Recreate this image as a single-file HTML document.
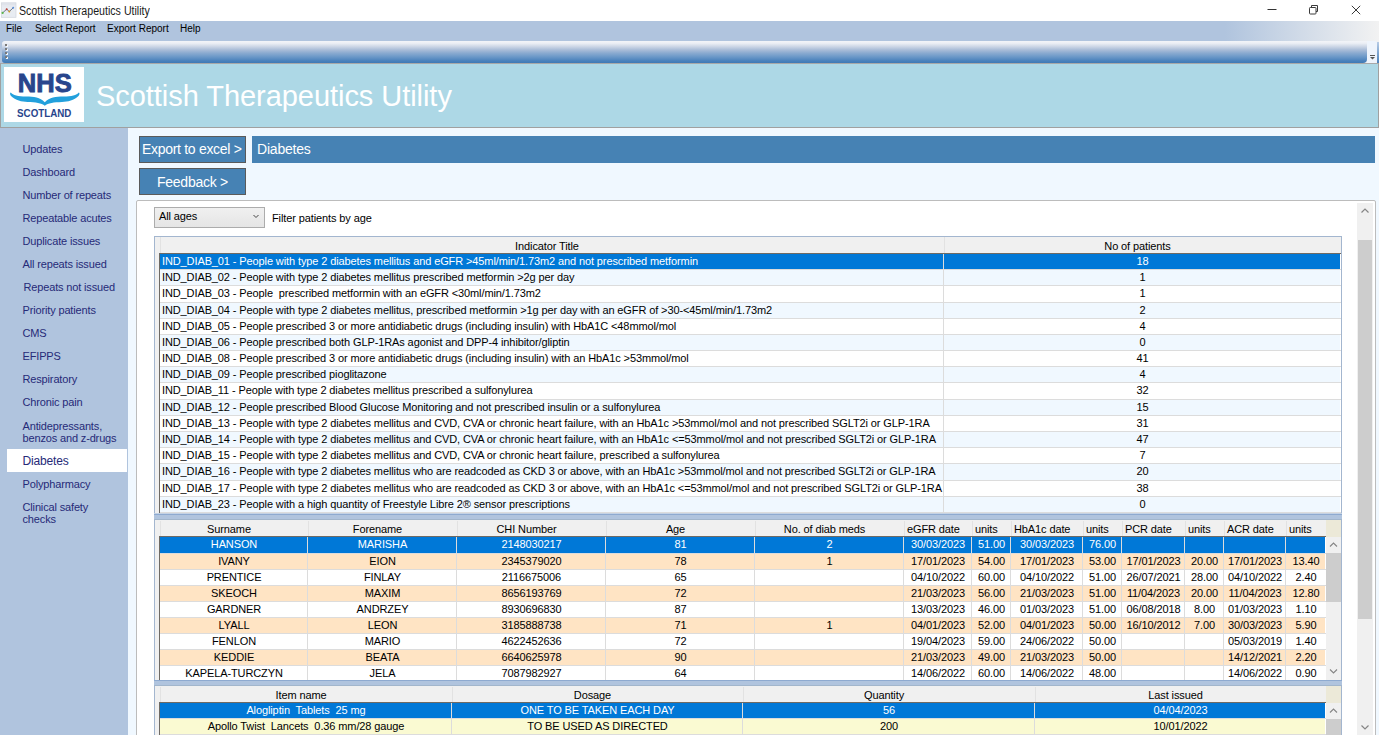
<!DOCTYPE html>
<html><head><meta charset="utf-8"><style>
*{box-sizing:border-box;margin:0;padding:0}
html,body{width:1379px;height:735px;overflow:hidden;background:#f0f8ff;font-family:"Liberation Sans",sans-serif;position:relative}
.a{position:absolute}
.nw{white-space:nowrap}
#title{left:0;top:0;width:1379px;height:21px;background:#fff}
#menu{left:0;top:21px;width:1379px;height:42px;background:linear-gradient(to right,#b0c4de 0,#b0c4de 1225px,#f2f2f2 1379px)}
#menu span{position:absolute;top:2px;font-size:10px;color:#000;white-space:nowrap}
#tool{left:2px;top:41px;width:1365px;height:22px;border-radius:3px 0 4px 3px;background:linear-gradient(to bottom,#f2f4f8 0,#eceff5 10%,#d3dce9 22%,#aabdd8 40%,#8aaad0 55%,#6b98c8 72%,#4a82bc 90%,#3f7ab5 100%)}
#tool2{left:1367px;top:41px;width:10px;height:22px;background:#eef4fc;border-radius:0 2px 2px 0}
#hdr{left:0;top:63px;width:1379px;height:65px;background:#add8e6;border-top:1px solid #a8a8a8;border-left:1px solid #a0a0a0;border-bottom:1px solid #a0a0a0;border-right:1px solid #a0a0a0}
#logo{left:4px;top:67px;width:80px;height:55px;background:#fff}
#htext{left:96px;top:78.5px;letter-spacing:-0.05px;font-size:29px;color:#fff;white-space:nowrap;line-height:34px}
#side{left:0;top:128px;width:128px;height:607px;background:#b0c4de}
.nav{position:absolute;left:22.5px;font-size:11px;color:#262a78;white-space:nowrap;line-height:12px;letter-spacing:-0.15px}
.btn{position:absolute;background:#4682b4;color:#fff;font-size:14px;white-space:nowrap}
.g{position:absolute;font-size:11px;letter-spacing:-0.11px;white-space:pre;line-height:16px;color:#000}
.c{position:absolute;overflow:hidden;white-space:nowrap}
</style></head><body>
<div id="title" class="a">
 <svg class="a" style="left:0;top:0" width="18" height="18" viewBox="0 0 18 18"><rect x="1.5" y="2.8" width="14.5" height="14.5" fill="#e8ecf2" stroke="#d0d4dc" stroke-width="0.7"/><line x1="1.5" y1="4" x2="16" y2="4" stroke="#d4d8e0" stroke-width="0.8"/><line x1="1.5" y1="6" x2="16" y2="6" stroke="#dfe3ea" stroke-width="0.6"/><polyline points="2.6,12.9 6.7,9.2 9.3,11.5 13.2,7.8" fill="none" stroke="#606878" stroke-width="0.9"/><circle cx="2.6" cy="12.9" r="1.1" fill="#5cb84a"/><circle cx="6.7" cy="9.2" r="1" fill="#c0453a"/><circle cx="9.3" cy="11.5" r="1" fill="#d49a20"/><circle cx="13.2" cy="7.8" r="1" fill="#5a8ed8"/></svg>
 <div class="a nw" style="left:19px;top:4px;font-size:12px;color:#1a1a1a;transform:scaleX(0.885);transform-origin:0 0">Scottish Therapeutics Utility</div>
 <svg class="a" style="left:1266px;top:4px" width="12" height="12"><line x1="1.5" y1="5.5" x2="10.5" y2="5.5" stroke="#333" stroke-width="1"/></svg>
 <svg class="a" style="left:1308px;top:4px" width="12" height="12"><rect x="1.5" y="3.5" width="6.5" height="6.5" rx="0.8" fill="none" stroke="#3a3a3a"/><polyline points="3.5,3.5 3.5,1.5 9.5,1.5 9.5,7.5 8,7.5" fill="none" stroke="#3a3a3a"/></svg>
 <svg class="a" style="left:1350px;top:4px" width="12" height="12"><line x1="1.8" y1="1.8" x2="10.2" y2="10.2" stroke="#3a3a3a"/><line x1="10.2" y1="1.8" x2="1.8" y2="10.2" stroke="#3a3a3a"/></svg>
</div>
<div id="menu" class="a"><span style="left:6px">File</span><span style="left:35px">Select Report</span><span style="left:107px">Export Report</span><span style="left:180px">Help</span></div>
<div id="tool" class="a"><div class="a" style="left:2.5px;top:3.3px;width:2px;height:2px;background:#7a7a7a;box-shadow:1px 1px 0 #f4f6fa"></div><div class="a" style="left:2.5px;top:7.3px;width:2px;height:2px;background:#7a7a7a;box-shadow:1px 1px 0 #f4f6fa"></div><div class="a" style="left:2.5px;top:11px;width:2px;height:2px;background:#7a7a7a;box-shadow:1px 1px 0 #f4f6fa"></div><div class="a" style="left:2.5px;top:14.6px;width:2px;height:2px;background:#7a7a7a;box-shadow:1px 1px 0 #f4f6fa"></div></div><div class="a" style="left:1377px;top:42px;width:2px;height:21px;background:linear-gradient(#b8cce6,#4a82bc)"></div><div id="tool2" class="a"><svg class="a" style="left:0;top:0" width="10" height="21"><rect x="3" y="14" width="5" height="1" fill="#555"/><polygon points="3,16 8,16 5.5,18.5" fill="#555"/></svg></div>
<div id="hdr" class="a"></div>
<div id="logo" class="a"><svg width="80" height="55" viewBox="0 0 80 55">
<text x="13.8" y="25.1" textLength="53.9" lengthAdjust="spacingAndGlyphs" font-family="Liberation Sans" font-weight="bold" font-size="25.7" fill="#28458c" stroke="#28458c" stroke-width="0.9">NHS</text>
<path d="M6.8,25.6 C9,28.5 14,29.6 22,29.6 C30,29.6 36,30.5 40.8,35.2 C45.6,30.5 51.6,29.6 59.6,29.6 C67.6,29.6 72.6,28.5 74.8,25.6 C76,26 75.5,28 74.5,29 C70,33.5 64,34.8 58,35 C50,35.3 44,36 40.8,38.8 C37.6,36 31.6,35.3 23.6,35 C17.6,34.8 11.6,33.5 7,29 C6,28 5.6,26 6.8,25.6 Z" fill="#22a0dc"/>
<text x="13.1" y="49.8" textLength="54.3" lengthAdjust="spacingAndGlyphs" font-family="Liberation Sans" font-weight="bold" font-size="10.4" fill="#28458c">SCOTLAND</text>
</svg></div>
<div id="htext" class="a">Scottish Therapeutics Utility</div>
<div id="side" class="a"></div>

<div class="nav" style="left:22.5px;top:143px">Updates</div>
<div class="nav" style="left:22.5px;top:166px">Dashboard</div>
<div class="nav" style="left:22.5px;top:189px">Number of repeats</div>
<div class="nav" style="left:22.5px;top:212px">Repeatable acutes</div>
<div class="nav" style="left:22.5px;top:235px">Duplicate issues</div>
<div class="nav" style="left:22.5px;top:258px">All repeats issued</div>
<div class="nav" style="left:23.5px;top:281px">Repeats not issued</div>
<div class="nav" style="left:22.5px;top:304px">Priority patients</div>
<div class="nav" style="left:22.5px;top:327px">CMS</div>
<div class="nav" style="left:22.5px;top:350px">EFIPPS</div>
<div class="nav" style="left:22.5px;top:373px">Respiratory</div>
<div class="nav" style="left:22.5px;top:396px">Chronic pain</div>
<div class="nav" style="top:420px">Antidepressants,<br>benzos and z-drugs</div>
<div class="a" style="left:7px;top:449px;width:120px;height:23px;background:#fff"></div>
<div class="nav" style="top:455px;font-size:12px;letter-spacing:-0.15px">Diabetes</div>
<div class="nav" style="top:478px">Polypharmacy</div>
<div class="nav" style="top:501px">Clinical safety<br>checks</div>
<div class="btn" style="left:139px;top:136px;width:107px;height:27px;border:1px solid #5a5a5a"><span class="a" style="left:2px;top:4px;letter-spacing:-0.3px">Export to excel &gt;</span></div>
<div class="btn" style="left:252px;top:136px;width:1123px;height:27px"><span class="a" style="left:5px;top:5px;letter-spacing:-0.2px">Diabetes</span></div>
<div class="btn" style="left:139px;top:168px;width:107px;height:27px;border:1px solid #5a5a5a"><span class="a" style="left:17px;top:4.5px;letter-spacing:-0.25px">Feedback &gt;</span></div>
<div class="a" style="left:136px;top:200px;width:1240px;height:540px;background:#fff;border:1px solid #bcbcbc;border-radius:2px"></div>
<div class="a" style="left:1357px;top:203px;width:16px;height:532px;background:#f0f0f0"></div>
<div class="a" style="left:1358px;top:240px;width:14px;height:379px;background:#cdcdcd"></div>
<svg class="a" style="left:1357px;top:203px" width="16" height="16"><polyline points="4.5,9.5 8,6 11.5,9.5" fill="none" stroke="#858585" stroke-width="1.2"/></svg>
<svg class="a" style="left:1357px;top:719px" width="16" height="16"><polyline points="4.5,6.5 8,10 11.5,6.5" fill="none" stroke="#858585" stroke-width="1.2"/></svg>
<div class="a" style="left:154px;top:207px;width:111px;height:21px;background:linear-gradient(#f0f0f0,#e5e5e5);border:1px solid #acacac"></div>
<div class="g" style="left:159px;top:208px">All ages</div>
<svg class="a" style="left:252px;top:213px" width="8" height="6"><polyline points="1.5,2 4,4.5 6.5,2" fill="none" stroke="#444" stroke-width="1"/></svg>
<div class="g" style="left:272px;top:209.5px">Filter patients by age</div>
<div class="a" style="left:154px;top:236px;width:1188px;height:277px;background:#fff;overflow:hidden"><div class="a" style="left:0;top:0;width:1px;height:277px;background:#a3b6cf"></div><div class="a" style="left:1187px;top:0;width:1px;height:277px;background:#a3b6cf"></div><div class="a" style="left:1px;top:0;width:5px;height:277px;background:#f0f0f0"></div><div class="a" style="left:1px;top:0;width:1186px;height:18px;background:#f0f0f0"></div><div class="a" style="left:6px;top:1px;width:1px;height:17px;background:#e2e2e2"></div><div class="g" style="left:6px;top:2px;width:774px;text-align:center">Indicator Title</div><div class="a" style="left:790px;top:1px;width:1px;height:17px;background:#e2e2e2"></div><div class="g" style="left:790px;top:2px;width:387px;text-align:center">No of patients</div><div class="a" style="left:6px;top:17px;width:1181px;height:1px;background:#6e6a64"></div><div class="c" style="left:6px;top:18px;width:783px;height:15px;background:#0078d7"><div class="g" style="left:2px;top:-1px;color:#fff">IND_DIAB_01 - People with type 2 diabetes mellitus and eGFR &gt;45ml/min/1.73m2 and not prescribed metformin</div></div><div class="c" style="left:790px;top:18px;width:396px;height:15px;background:#0078d7"><div class="g" style="left:0.5px;top:-1px;width:396px;text-align:center;color:#fff">18</div></div><div class="a" style="left:6px;top:33px;width:1181px;height:1px;background:#dcdcdc"></div><div class="c" style="left:6px;top:34px;width:783px;height:15px;background:#f0f8ff"><div class="g" style="left:2px;top:-1px;color:#000">IND_DIAB_02 - People with type 2 diabetes mellitus prescribed metformin &gt;2g per day</div></div><div class="c" style="left:790px;top:34px;width:396px;height:15px;background:#f0f8ff"><div class="g" style="left:0.5px;top:-1px;width:396px;text-align:center;color:#000">1</div></div><div class="a" style="left:6px;top:49px;width:1181px;height:1px;background:#dcdcdc"></div><div class="c" style="left:6px;top:50px;width:783px;height:16px;background:#fff"><div class="g" style="left:2px;top:-1px;color:#000">IND_DIAB_03 - People  prescribed metformin with an eGFR &lt;30ml/min/1.73m2</div></div><div class="c" style="left:790px;top:50px;width:396px;height:16px;background:#fff"><div class="g" style="left:0.5px;top:-1px;width:396px;text-align:center;color:#000">1</div></div><div class="a" style="left:6px;top:66px;width:1181px;height:1px;background:#dcdcdc"></div><div class="c" style="left:6px;top:67px;width:783px;height:15px;background:#f0f8ff"><div class="g" style="left:2px;top:-1px;color:#000">IND_DIAB_04 - People with type 2 diabetes mellitus, prescribed metformin &gt;1g per day with an eGFR of &gt;30-&lt;45ml/min/1.73m2</div></div><div class="c" style="left:790px;top:67px;width:396px;height:15px;background:#f0f8ff"><div class="g" style="left:0.5px;top:-1px;width:396px;text-align:center;color:#000">2</div></div><div class="a" style="left:6px;top:82px;width:1181px;height:1px;background:#dcdcdc"></div><div class="c" style="left:6px;top:83px;width:783px;height:15px;background:#fff"><div class="g" style="left:2px;top:-1px;color:#000">IND_DIAB_05 - People prescribed 3 or more antidiabetic drugs (including insulin) with HbA1C &lt;48mmol/mol</div></div><div class="c" style="left:790px;top:83px;width:396px;height:15px;background:#fff"><div class="g" style="left:0.5px;top:-1px;width:396px;text-align:center;color:#000">4</div></div><div class="a" style="left:6px;top:98px;width:1181px;height:1px;background:#dcdcdc"></div><div class="c" style="left:6px;top:99px;width:783px;height:15px;background:#f0f8ff"><div class="g" style="left:2px;top:-1px;color:#000">IND_DIAB_06 - People prescribed both GLP-1RAs agonist and DPP-4 inhibitor/gliptin</div></div><div class="c" style="left:790px;top:99px;width:396px;height:15px;background:#f0f8ff"><div class="g" style="left:0.5px;top:-1px;width:396px;text-align:center;color:#000">0</div></div><div class="a" style="left:6px;top:114px;width:1181px;height:1px;background:#dcdcdc"></div><div class="c" style="left:6px;top:115px;width:783px;height:15px;background:#fff"><div class="g" style="left:2px;top:-1px;color:#000">IND_DIAB_08 - People prescribed 3 or more antidiabetic drugs (including insulin) with an HbA1c &gt;53mmol/mol</div></div><div class="c" style="left:790px;top:115px;width:396px;height:15px;background:#fff"><div class="g" style="left:0.5px;top:-1px;width:396px;text-align:center;color:#000">41</div></div><div class="a" style="left:6px;top:130px;width:1181px;height:1px;background:#dcdcdc"></div><div class="c" style="left:6px;top:131px;width:783px;height:15px;background:#f0f8ff"><div class="g" style="left:2px;top:-1px;color:#000">IND_DIAB_09 - People prescribed pioglitazone</div></div><div class="c" style="left:790px;top:131px;width:396px;height:15px;background:#f0f8ff"><div class="g" style="left:0.5px;top:-1px;width:396px;text-align:center;color:#000">4</div></div><div class="a" style="left:6px;top:146px;width:1181px;height:1px;background:#dcdcdc"></div><div class="c" style="left:6px;top:147px;width:783px;height:16px;background:#fff"><div class="g" style="left:2px;top:-1px;color:#000">IND_DIAB_11 - People with type 2 diabetes mellitus prescribed a sulfonylurea</div></div><div class="c" style="left:790px;top:147px;width:396px;height:16px;background:#fff"><div class="g" style="left:0.5px;top:-1px;width:396px;text-align:center;color:#000">32</div></div><div class="a" style="left:6px;top:163px;width:1181px;height:1px;background:#dcdcdc"></div><div class="c" style="left:6px;top:164px;width:783px;height:15px;background:#f0f8ff"><div class="g" style="left:2px;top:-1px;color:#000">IND_DIAB_12 - People prescribed Blood Glucose Monitoring and not prescribed insulin or a sulfonylurea</div></div><div class="c" style="left:790px;top:164px;width:396px;height:15px;background:#f0f8ff"><div class="g" style="left:0.5px;top:-1px;width:396px;text-align:center;color:#000">15</div></div><div class="a" style="left:6px;top:179px;width:1181px;height:1px;background:#dcdcdc"></div><div class="c" style="left:6px;top:180px;width:783px;height:15px;background:#fff"><div class="g" style="left:2px;top:-1px;color:#000">IND_DIAB_13 - People with type 2 diabetes mellitus and CVD, CVA or chronic heart failure, with an HbA1c &gt;53mmol/mol and not prescribed SGLT2i or GLP-1RA</div></div><div class="c" style="left:790px;top:180px;width:396px;height:15px;background:#fff"><div class="g" style="left:0.5px;top:-1px;width:396px;text-align:center;color:#000">31</div></div><div class="a" style="left:6px;top:195px;width:1181px;height:1px;background:#dcdcdc"></div><div class="c" style="left:6px;top:196px;width:783px;height:15px;background:#f0f8ff"><div class="g" style="left:2px;top:-1px;color:#000">IND_DIAB_14 - People with type 2 diabetes mellitus and CVD, CVA or chronic heart failure, with an HbA1c &lt;=53mmol/mol and not prescribed SGLT2i or GLP-1RA</div></div><div class="c" style="left:790px;top:196px;width:396px;height:15px;background:#f0f8ff"><div class="g" style="left:0.5px;top:-1px;width:396px;text-align:center;color:#000">47</div></div><div class="a" style="left:6px;top:211px;width:1181px;height:1px;background:#dcdcdc"></div><div class="c" style="left:6px;top:212px;width:783px;height:15px;background:#fff"><div class="g" style="left:2px;top:-1px;color:#000">IND_DIAB_15 - People with type 2 diabetes mellitus and CVD, CVA or chronic heart failure, prescribed a sulfonylurea</div></div><div class="c" style="left:790px;top:212px;width:396px;height:15px;background:#fff"><div class="g" style="left:0.5px;top:-1px;width:396px;text-align:center;color:#000">7</div></div><div class="a" style="left:6px;top:227px;width:1181px;height:1px;background:#dcdcdc"></div><div class="c" style="left:6px;top:228px;width:783px;height:16px;background:#f0f8ff"><div class="g" style="left:2px;top:-1px;color:#000">IND_DIAB_16 - People with type 2 diabetes mellitus who are readcoded as CKD 3 or above, with an HbA1c &gt;53mmol/mol and not prescribed SGLT2i or GLP-1RA</div></div><div class="c" style="left:790px;top:228px;width:396px;height:16px;background:#f0f8ff"><div class="g" style="left:0.5px;top:-1px;width:396px;text-align:center;color:#000">20</div></div><div class="a" style="left:6px;top:244px;width:1181px;height:1px;background:#dcdcdc"></div><div class="c" style="left:6px;top:245px;width:783px;height:15px;background:#fff"><div class="g" style="left:2px;top:-1px;color:#000">IND_DIAB_17 - People with type 2 diabetes mellitus who are readcoded as CKD 3 or above, with an HbA1c &lt;=53mmol/mol and not prescribed SGLT2i or GLP-1RA</div></div><div class="c" style="left:790px;top:245px;width:396px;height:15px;background:#fff"><div class="g" style="left:0.5px;top:-1px;width:396px;text-align:center;color:#000">38</div></div><div class="a" style="left:6px;top:260px;width:1181px;height:1px;background:#dcdcdc"></div><div class="c" style="left:6px;top:261px;width:783px;height:15px;background:#f0f8ff"><div class="g" style="left:2px;top:-1px;color:#000">IND_DIAB_23 - People with a high quantity of Freestyle Libre 2® sensor prescriptions</div></div><div class="c" style="left:790px;top:261px;width:396px;height:15px;background:#f0f8ff"><div class="g" style="left:0.5px;top:-1px;width:396px;text-align:center;color:#000">0</div></div><div class="a" style="left:6px;top:276px;width:1181px;height:1px;background:#dcdcdc"></div><div class="a" style="left:789px;top:18px;width:1px;height:259px;background:#dcdcdc"></div><div class="a" style="left:5px;top:17px;width:1px;height:260px;background:#6e6a64"></div><div class="a" style="left:0;top:0;width:1188px;height:1px;background:#a3b6cf"></div></div>
<div class="a" style="left:154px;top:513px;width:1188px;height:7px;background:linear-gradient(#c4d2e4 0,#c4d2e4 1px,#8eaad0 1px,#8eaad0 2px,#b0c4de 2px,#b0c4de 6px,#a2b6cc 6px)"></div>
<div class="a" style="left:154px;top:520px;width:1188px;height:160px;background:#fff;overflow:hidden"><div class="a" style="left:0;top:0;width:1px;height:160px;background:#a3b6cf"></div><div class="a" style="left:1187px;top:0;width:1px;height:160px;background:#a3b6cf"></div><div class="a" style="left:1px;top:0;width:5px;height:160px;background:#f0f0f0"></div><div class="a" style="left:1px;top:0;width:1186px;height:17px;background:#f0f0f0"></div><div class="a" style="left:6px;top:1px;width:1px;height:16px;background:#e2e2e2"></div><div class="g" style="left:6px;top:1px;width:138px;text-align:center">Surname</div><div class="a" style="left:154px;top:1px;width:1px;height:16px;background:#e2e2e2"></div><div class="g" style="left:154px;top:1px;width:139px;text-align:center">Forename</div><div class="a" style="left:303px;top:1px;width:1px;height:16px;background:#e2e2e2"></div><div class="g" style="left:303px;top:1px;width:139px;text-align:center">CHI Number</div><div class="a" style="left:452px;top:1px;width:1px;height:16px;background:#e2e2e2"></div><div class="g" style="left:452px;top:1px;width:139px;text-align:center">Age</div><div class="a" style="left:601px;top:1px;width:1px;height:16px;background:#e2e2e2"></div><div class="g" style="left:601px;top:1px;width:139px;text-align:center">No. of diab meds</div><div class="a" style="left:750px;top:1px;width:1px;height:16px;background:#e2e2e2"></div><div class="g" style="left:753px;top:1px">eGFR date</div><div class="a" style="left:818px;top:1px;width:1px;height:16px;background:#e2e2e2"></div><div class="g" style="left:821px;top:1px">units</div><div class="a" style="left:857px;top:1px;width:1px;height:16px;background:#e2e2e2"></div><div class="g" style="left:860px;top:1px">HbA1c date</div><div class="a" style="left:929px;top:1px;width:1px;height:16px;background:#e2e2e2"></div><div class="g" style="left:932px;top:1px">units</div><div class="a" style="left:968px;top:1px;width:1px;height:16px;background:#e2e2e2"></div><div class="g" style="left:971px;top:1px">PCR date</div><div class="a" style="left:1031px;top:1px;width:1px;height:16px;background:#e2e2e2"></div><div class="g" style="left:1034px;top:1px">units</div><div class="a" style="left:1070px;top:1px;width:1px;height:16px;background:#e2e2e2"></div><div class="g" style="left:1073px;top:1px">ACR date</div><div class="a" style="left:1132px;top:1px;width:1px;height:16px;background:#e2e2e2"></div><div class="g" style="left:1135px;top:1px">units</div><div class="a" style="left:6px;top:16px;width:1181px;height:1px;background:#6e6a64"></div><div class="c" style="left:6px;top:17px;width:147px;height:16px;background:#0078d7"><div class="g" style="left:0.5px;top:-1px;width:147px;text-align:center;color:#fff">HANSON</div></div><div class="c" style="left:154px;top:17px;width:148px;height:16px;background:#0078d7"><div class="g" style="left:0.5px;top:-1px;width:148px;text-align:center;color:#fff">MARISHA</div></div><div class="c" style="left:303px;top:17px;width:148px;height:16px;background:#0078d7"><div class="g" style="left:0.5px;top:-1px;width:148px;text-align:center;color:#fff">2148030217</div></div><div class="c" style="left:452px;top:17px;width:148px;height:16px;background:#0078d7"><div class="g" style="left:0.5px;top:-1px;width:148px;text-align:center;color:#fff">81</div></div><div class="c" style="left:601px;top:17px;width:148px;height:16px;background:#0078d7"><div class="g" style="left:0.5px;top:-1px;width:148px;text-align:center;color:#fff">2</div></div><div class="c" style="left:750px;top:17px;width:67px;height:16px;background:#0078d7"><div class="g" style="left:0.5px;top:-1px;width:67px;text-align:center;color:#fff">30/03/2023</div></div><div class="c" style="left:818px;top:17px;width:38px;height:16px;background:#0078d7"><div class="g" style="left:0.5px;top:-1px;width:38px;text-align:center;color:#fff">51.00</div></div><div class="c" style="left:857px;top:17px;width:71px;height:16px;background:#0078d7"><div class="g" style="left:0.5px;top:-1px;width:71px;text-align:center;color:#fff">30/03/2023</div></div><div class="c" style="left:929px;top:17px;width:38px;height:16px;background:#0078d7"><div class="g" style="left:0.5px;top:-1px;width:38px;text-align:center;color:#fff">76.00</div></div><div class="c" style="left:968px;top:17px;width:62px;height:16px;background:#0078d7"><div class="g" style="left:0.5px;top:-1px;width:62px;text-align:center;color:#fff"></div></div><div class="c" style="left:1031px;top:17px;width:38px;height:16px;background:#0078d7"><div class="g" style="left:0.5px;top:-1px;width:38px;text-align:center;color:#fff"></div></div><div class="c" style="left:1070px;top:17px;width:61px;height:16px;background:#0078d7"><div class="g" style="left:0.5px;top:-1px;width:61px;text-align:center;color:#fff"></div></div><div class="c" style="left:1132px;top:17px;width:39px;height:16px;background:#0078d7"><div class="g" style="left:0.5px;top:-1px;width:39px;text-align:center;color:#fff"></div></div><div class="a" style="left:6px;top:33px;width:1181px;height:1px;background:#dcdcdc"></div><div class="c" style="left:6px;top:34px;width:147px;height:15px;background:#ffe4c4"><div class="g" style="left:0.5px;top:-1px;width:147px;text-align:center;color:#000">IVANY</div></div><div class="c" style="left:154px;top:34px;width:148px;height:15px;background:#ffe4c4"><div class="g" style="left:0.5px;top:-1px;width:148px;text-align:center;color:#000">EION</div></div><div class="c" style="left:303px;top:34px;width:148px;height:15px;background:#ffe4c4"><div class="g" style="left:0.5px;top:-1px;width:148px;text-align:center;color:#000">2345379020</div></div><div class="c" style="left:452px;top:34px;width:148px;height:15px;background:#ffe4c4"><div class="g" style="left:0.5px;top:-1px;width:148px;text-align:center;color:#000">78</div></div><div class="c" style="left:601px;top:34px;width:148px;height:15px;background:#ffe4c4"><div class="g" style="left:0.5px;top:-1px;width:148px;text-align:center;color:#000">1</div></div><div class="c" style="left:750px;top:34px;width:67px;height:15px;background:#ffe4c4"><div class="g" style="left:0.5px;top:-1px;width:67px;text-align:center;color:#000">17/01/2023</div></div><div class="c" style="left:818px;top:34px;width:38px;height:15px;background:#ffe4c4"><div class="g" style="left:0.5px;top:-1px;width:38px;text-align:center;color:#000">54.00</div></div><div class="c" style="left:857px;top:34px;width:71px;height:15px;background:#ffe4c4"><div class="g" style="left:0.5px;top:-1px;width:71px;text-align:center;color:#000">17/01/2023</div></div><div class="c" style="left:929px;top:34px;width:38px;height:15px;background:#ffe4c4"><div class="g" style="left:0.5px;top:-1px;width:38px;text-align:center;color:#000">53.00</div></div><div class="c" style="left:968px;top:34px;width:62px;height:15px;background:#ffe4c4"><div class="g" style="left:0.5px;top:-1px;width:62px;text-align:center;color:#000">17/01/2023</div></div><div class="c" style="left:1031px;top:34px;width:38px;height:15px;background:#ffe4c4"><div class="g" style="left:0.5px;top:-1px;width:38px;text-align:center;color:#000">20.00</div></div><div class="c" style="left:1070px;top:34px;width:61px;height:15px;background:#ffe4c4"><div class="g" style="left:0.5px;top:-1px;width:61px;text-align:center;color:#000">17/01/2023</div></div><div class="c" style="left:1132px;top:34px;width:39px;height:15px;background:#ffe4c4"><div class="g" style="left:0.5px;top:-1px;width:39px;text-align:center;color:#000">13.40</div></div><div class="a" style="left:6px;top:49px;width:1181px;height:1px;background:#dcdcdc"></div><div class="c" style="left:6px;top:50px;width:147px;height:15px;background:#fff"><div class="g" style="left:0.5px;top:-1px;width:147px;text-align:center;color:#000">PRENTICE</div></div><div class="c" style="left:154px;top:50px;width:148px;height:15px;background:#fff"><div class="g" style="left:0.5px;top:-1px;width:148px;text-align:center;color:#000">FINLAY</div></div><div class="c" style="left:303px;top:50px;width:148px;height:15px;background:#fff"><div class="g" style="left:0.5px;top:-1px;width:148px;text-align:center;color:#000">2116675006</div></div><div class="c" style="left:452px;top:50px;width:148px;height:15px;background:#fff"><div class="g" style="left:0.5px;top:-1px;width:148px;text-align:center;color:#000">65</div></div><div class="c" style="left:601px;top:50px;width:148px;height:15px;background:#fff"><div class="g" style="left:0.5px;top:-1px;width:148px;text-align:center;color:#000"></div></div><div class="c" style="left:750px;top:50px;width:67px;height:15px;background:#fff"><div class="g" style="left:0.5px;top:-1px;width:67px;text-align:center;color:#000">04/10/2022</div></div><div class="c" style="left:818px;top:50px;width:38px;height:15px;background:#fff"><div class="g" style="left:0.5px;top:-1px;width:38px;text-align:center;color:#000">60.00</div></div><div class="c" style="left:857px;top:50px;width:71px;height:15px;background:#fff"><div class="g" style="left:0.5px;top:-1px;width:71px;text-align:center;color:#000">04/10/2022</div></div><div class="c" style="left:929px;top:50px;width:38px;height:15px;background:#fff"><div class="g" style="left:0.5px;top:-1px;width:38px;text-align:center;color:#000">51.00</div></div><div class="c" style="left:968px;top:50px;width:62px;height:15px;background:#fff"><div class="g" style="left:0.5px;top:-1px;width:62px;text-align:center;color:#000">26/07/2021</div></div><div class="c" style="left:1031px;top:50px;width:38px;height:15px;background:#fff"><div class="g" style="left:0.5px;top:-1px;width:38px;text-align:center;color:#000">28.00</div></div><div class="c" style="left:1070px;top:50px;width:61px;height:15px;background:#fff"><div class="g" style="left:0.5px;top:-1px;width:61px;text-align:center;color:#000">04/10/2022</div></div><div class="c" style="left:1132px;top:50px;width:39px;height:15px;background:#fff"><div class="g" style="left:0.5px;top:-1px;width:39px;text-align:center;color:#000">2.40</div></div><div class="a" style="left:6px;top:65px;width:1181px;height:1px;background:#dcdcdc"></div><div class="c" style="left:6px;top:66px;width:147px;height:15px;background:#ffe4c4"><div class="g" style="left:0.5px;top:-1px;width:147px;text-align:center;color:#000">SKEOCH</div></div><div class="c" style="left:154px;top:66px;width:148px;height:15px;background:#ffe4c4"><div class="g" style="left:0.5px;top:-1px;width:148px;text-align:center;color:#000">MAXIM</div></div><div class="c" style="left:303px;top:66px;width:148px;height:15px;background:#ffe4c4"><div class="g" style="left:0.5px;top:-1px;width:148px;text-align:center;color:#000">8656193769</div></div><div class="c" style="left:452px;top:66px;width:148px;height:15px;background:#ffe4c4"><div class="g" style="left:0.5px;top:-1px;width:148px;text-align:center;color:#000">72</div></div><div class="c" style="left:601px;top:66px;width:148px;height:15px;background:#ffe4c4"><div class="g" style="left:0.5px;top:-1px;width:148px;text-align:center;color:#000"></div></div><div class="c" style="left:750px;top:66px;width:67px;height:15px;background:#ffe4c4"><div class="g" style="left:0.5px;top:-1px;width:67px;text-align:center;color:#000">21/03/2023</div></div><div class="c" style="left:818px;top:66px;width:38px;height:15px;background:#ffe4c4"><div class="g" style="left:0.5px;top:-1px;width:38px;text-align:center;color:#000">56.00</div></div><div class="c" style="left:857px;top:66px;width:71px;height:15px;background:#ffe4c4"><div class="g" style="left:0.5px;top:-1px;width:71px;text-align:center;color:#000">21/03/2023</div></div><div class="c" style="left:929px;top:66px;width:38px;height:15px;background:#ffe4c4"><div class="g" style="left:0.5px;top:-1px;width:38px;text-align:center;color:#000">51.00</div></div><div class="c" style="left:968px;top:66px;width:62px;height:15px;background:#ffe4c4"><div class="g" style="left:0.5px;top:-1px;width:62px;text-align:center;color:#000">11/04/2023</div></div><div class="c" style="left:1031px;top:66px;width:38px;height:15px;background:#ffe4c4"><div class="g" style="left:0.5px;top:-1px;width:38px;text-align:center;color:#000">20.00</div></div><div class="c" style="left:1070px;top:66px;width:61px;height:15px;background:#ffe4c4"><div class="g" style="left:0.5px;top:-1px;width:61px;text-align:center;color:#000">11/04/2023</div></div><div class="c" style="left:1132px;top:66px;width:39px;height:15px;background:#ffe4c4"><div class="g" style="left:0.5px;top:-1px;width:39px;text-align:center;color:#000">12.80</div></div><div class="a" style="left:6px;top:81px;width:1181px;height:1px;background:#dcdcdc"></div><div class="c" style="left:6px;top:82px;width:147px;height:15px;background:#fff"><div class="g" style="left:0.5px;top:-1px;width:147px;text-align:center;color:#000">GARDNER</div></div><div class="c" style="left:154px;top:82px;width:148px;height:15px;background:#fff"><div class="g" style="left:0.5px;top:-1px;width:148px;text-align:center;color:#000">ANDRZEY</div></div><div class="c" style="left:303px;top:82px;width:148px;height:15px;background:#fff"><div class="g" style="left:0.5px;top:-1px;width:148px;text-align:center;color:#000">8930696830</div></div><div class="c" style="left:452px;top:82px;width:148px;height:15px;background:#fff"><div class="g" style="left:0.5px;top:-1px;width:148px;text-align:center;color:#000">87</div></div><div class="c" style="left:601px;top:82px;width:148px;height:15px;background:#fff"><div class="g" style="left:0.5px;top:-1px;width:148px;text-align:center;color:#000"></div></div><div class="c" style="left:750px;top:82px;width:67px;height:15px;background:#fff"><div class="g" style="left:0.5px;top:-1px;width:67px;text-align:center;color:#000">13/03/2023</div></div><div class="c" style="left:818px;top:82px;width:38px;height:15px;background:#fff"><div class="g" style="left:0.5px;top:-1px;width:38px;text-align:center;color:#000">46.00</div></div><div class="c" style="left:857px;top:82px;width:71px;height:15px;background:#fff"><div class="g" style="left:0.5px;top:-1px;width:71px;text-align:center;color:#000">01/03/2023</div></div><div class="c" style="left:929px;top:82px;width:38px;height:15px;background:#fff"><div class="g" style="left:0.5px;top:-1px;width:38px;text-align:center;color:#000">51.00</div></div><div class="c" style="left:968px;top:82px;width:62px;height:15px;background:#fff"><div class="g" style="left:0.5px;top:-1px;width:62px;text-align:center;color:#000">06/08/2018</div></div><div class="c" style="left:1031px;top:82px;width:38px;height:15px;background:#fff"><div class="g" style="left:0.5px;top:-1px;width:38px;text-align:center;color:#000">8.00</div></div><div class="c" style="left:1070px;top:82px;width:61px;height:15px;background:#fff"><div class="g" style="left:0.5px;top:-1px;width:61px;text-align:center;color:#000">01/03/2023</div></div><div class="c" style="left:1132px;top:82px;width:39px;height:15px;background:#fff"><div class="g" style="left:0.5px;top:-1px;width:39px;text-align:center;color:#000">1.10</div></div><div class="a" style="left:6px;top:97px;width:1181px;height:1px;background:#dcdcdc"></div><div class="c" style="left:6px;top:98px;width:147px;height:15px;background:#ffe4c4"><div class="g" style="left:0.5px;top:-1px;width:147px;text-align:center;color:#000">LYALL</div></div><div class="c" style="left:154px;top:98px;width:148px;height:15px;background:#ffe4c4"><div class="g" style="left:0.5px;top:-1px;width:148px;text-align:center;color:#000">LEON</div></div><div class="c" style="left:303px;top:98px;width:148px;height:15px;background:#ffe4c4"><div class="g" style="left:0.5px;top:-1px;width:148px;text-align:center;color:#000">3185888738</div></div><div class="c" style="left:452px;top:98px;width:148px;height:15px;background:#ffe4c4"><div class="g" style="left:0.5px;top:-1px;width:148px;text-align:center;color:#000">71</div></div><div class="c" style="left:601px;top:98px;width:148px;height:15px;background:#ffe4c4"><div class="g" style="left:0.5px;top:-1px;width:148px;text-align:center;color:#000">1</div></div><div class="c" style="left:750px;top:98px;width:67px;height:15px;background:#ffe4c4"><div class="g" style="left:0.5px;top:-1px;width:67px;text-align:center;color:#000">04/01/2023</div></div><div class="c" style="left:818px;top:98px;width:38px;height:15px;background:#ffe4c4"><div class="g" style="left:0.5px;top:-1px;width:38px;text-align:center;color:#000">52.00</div></div><div class="c" style="left:857px;top:98px;width:71px;height:15px;background:#ffe4c4"><div class="g" style="left:0.5px;top:-1px;width:71px;text-align:center;color:#000">04/01/2023</div></div><div class="c" style="left:929px;top:98px;width:38px;height:15px;background:#ffe4c4"><div class="g" style="left:0.5px;top:-1px;width:38px;text-align:center;color:#000">50.00</div></div><div class="c" style="left:968px;top:98px;width:62px;height:15px;background:#ffe4c4"><div class="g" style="left:0.5px;top:-1px;width:62px;text-align:center;color:#000">16/10/2012</div></div><div class="c" style="left:1031px;top:98px;width:38px;height:15px;background:#ffe4c4"><div class="g" style="left:0.5px;top:-1px;width:38px;text-align:center;color:#000">7.00</div></div><div class="c" style="left:1070px;top:98px;width:61px;height:15px;background:#ffe4c4"><div class="g" style="left:0.5px;top:-1px;width:61px;text-align:center;color:#000">30/03/2023</div></div><div class="c" style="left:1132px;top:98px;width:39px;height:15px;background:#ffe4c4"><div class="g" style="left:0.5px;top:-1px;width:39px;text-align:center;color:#000">5.90</div></div><div class="a" style="left:6px;top:113px;width:1181px;height:1px;background:#dcdcdc"></div><div class="c" style="left:6px;top:114px;width:147px;height:15px;background:#fff"><div class="g" style="left:0.5px;top:-1px;width:147px;text-align:center;color:#000">FENLON</div></div><div class="c" style="left:154px;top:114px;width:148px;height:15px;background:#fff"><div class="g" style="left:0.5px;top:-1px;width:148px;text-align:center;color:#000">MARIO</div></div><div class="c" style="left:303px;top:114px;width:148px;height:15px;background:#fff"><div class="g" style="left:0.5px;top:-1px;width:148px;text-align:center;color:#000">4622452636</div></div><div class="c" style="left:452px;top:114px;width:148px;height:15px;background:#fff"><div class="g" style="left:0.5px;top:-1px;width:148px;text-align:center;color:#000">72</div></div><div class="c" style="left:601px;top:114px;width:148px;height:15px;background:#fff"><div class="g" style="left:0.5px;top:-1px;width:148px;text-align:center;color:#000"></div></div><div class="c" style="left:750px;top:114px;width:67px;height:15px;background:#fff"><div class="g" style="left:0.5px;top:-1px;width:67px;text-align:center;color:#000">19/04/2023</div></div><div class="c" style="left:818px;top:114px;width:38px;height:15px;background:#fff"><div class="g" style="left:0.5px;top:-1px;width:38px;text-align:center;color:#000">59.00</div></div><div class="c" style="left:857px;top:114px;width:71px;height:15px;background:#fff"><div class="g" style="left:0.5px;top:-1px;width:71px;text-align:center;color:#000">24/06/2022</div></div><div class="c" style="left:929px;top:114px;width:38px;height:15px;background:#fff"><div class="g" style="left:0.5px;top:-1px;width:38px;text-align:center;color:#000">50.00</div></div><div class="c" style="left:968px;top:114px;width:62px;height:15px;background:#fff"><div class="g" style="left:0.5px;top:-1px;width:62px;text-align:center;color:#000"></div></div><div class="c" style="left:1031px;top:114px;width:38px;height:15px;background:#fff"><div class="g" style="left:0.5px;top:-1px;width:38px;text-align:center;color:#000"></div></div><div class="c" style="left:1070px;top:114px;width:61px;height:15px;background:#fff"><div class="g" style="left:0.5px;top:-1px;width:61px;text-align:center;color:#000">05/03/2019</div></div><div class="c" style="left:1132px;top:114px;width:39px;height:15px;background:#fff"><div class="g" style="left:0.5px;top:-1px;width:39px;text-align:center;color:#000">1.40</div></div><div class="a" style="left:6px;top:129px;width:1181px;height:1px;background:#dcdcdc"></div><div class="c" style="left:6px;top:130px;width:147px;height:15px;background:#ffe4c4"><div class="g" style="left:0.5px;top:-1px;width:147px;text-align:center;color:#000">KEDDIE</div></div><div class="c" style="left:154px;top:130px;width:148px;height:15px;background:#ffe4c4"><div class="g" style="left:0.5px;top:-1px;width:148px;text-align:center;color:#000">BEATA</div></div><div class="c" style="left:303px;top:130px;width:148px;height:15px;background:#ffe4c4"><div class="g" style="left:0.5px;top:-1px;width:148px;text-align:center;color:#000">6640625978</div></div><div class="c" style="left:452px;top:130px;width:148px;height:15px;background:#ffe4c4"><div class="g" style="left:0.5px;top:-1px;width:148px;text-align:center;color:#000">90</div></div><div class="c" style="left:601px;top:130px;width:148px;height:15px;background:#ffe4c4"><div class="g" style="left:0.5px;top:-1px;width:148px;text-align:center;color:#000"></div></div><div class="c" style="left:750px;top:130px;width:67px;height:15px;background:#ffe4c4"><div class="g" style="left:0.5px;top:-1px;width:67px;text-align:center;color:#000">21/03/2023</div></div><div class="c" style="left:818px;top:130px;width:38px;height:15px;background:#ffe4c4"><div class="g" style="left:0.5px;top:-1px;width:38px;text-align:center;color:#000">49.00</div></div><div class="c" style="left:857px;top:130px;width:71px;height:15px;background:#ffe4c4"><div class="g" style="left:0.5px;top:-1px;width:71px;text-align:center;color:#000">21/03/2023</div></div><div class="c" style="left:929px;top:130px;width:38px;height:15px;background:#ffe4c4"><div class="g" style="left:0.5px;top:-1px;width:38px;text-align:center;color:#000">50.00</div></div><div class="c" style="left:968px;top:130px;width:62px;height:15px;background:#ffe4c4"><div class="g" style="left:0.5px;top:-1px;width:62px;text-align:center;color:#000"></div></div><div class="c" style="left:1031px;top:130px;width:38px;height:15px;background:#ffe4c4"><div class="g" style="left:0.5px;top:-1px;width:38px;text-align:center;color:#000"></div></div><div class="c" style="left:1070px;top:130px;width:61px;height:15px;background:#ffe4c4"><div class="g" style="left:0.5px;top:-1px;width:61px;text-align:center;color:#000">14/12/2021</div></div><div class="c" style="left:1132px;top:130px;width:39px;height:15px;background:#ffe4c4"><div class="g" style="left:0.5px;top:-1px;width:39px;text-align:center;color:#000">2.20</div></div><div class="a" style="left:6px;top:145px;width:1181px;height:1px;background:#dcdcdc"></div><div class="c" style="left:6px;top:146px;width:147px;height:15px;background:#fff"><div class="g" style="left:0.5px;top:-1px;width:147px;text-align:center;color:#000">KAPELA-TURCZYN</div></div><div class="c" style="left:154px;top:146px;width:148px;height:15px;background:#fff"><div class="g" style="left:0.5px;top:-1px;width:148px;text-align:center;color:#000">JELA</div></div><div class="c" style="left:303px;top:146px;width:148px;height:15px;background:#fff"><div class="g" style="left:0.5px;top:-1px;width:148px;text-align:center;color:#000">7087982927</div></div><div class="c" style="left:452px;top:146px;width:148px;height:15px;background:#fff"><div class="g" style="left:0.5px;top:-1px;width:148px;text-align:center;color:#000">64</div></div><div class="c" style="left:601px;top:146px;width:148px;height:15px;background:#fff"><div class="g" style="left:0.5px;top:-1px;width:148px;text-align:center;color:#000"></div></div><div class="c" style="left:750px;top:146px;width:67px;height:15px;background:#fff"><div class="g" style="left:0.5px;top:-1px;width:67px;text-align:center;color:#000">14/06/2022</div></div><div class="c" style="left:818px;top:146px;width:38px;height:15px;background:#fff"><div class="g" style="left:0.5px;top:-1px;width:38px;text-align:center;color:#000">60.00</div></div><div class="c" style="left:857px;top:146px;width:71px;height:15px;background:#fff"><div class="g" style="left:0.5px;top:-1px;width:71px;text-align:center;color:#000">14/06/2022</div></div><div class="c" style="left:929px;top:146px;width:38px;height:15px;background:#fff"><div class="g" style="left:0.5px;top:-1px;width:38px;text-align:center;color:#000">48.00</div></div><div class="c" style="left:968px;top:146px;width:62px;height:15px;background:#fff"><div class="g" style="left:0.5px;top:-1px;width:62px;text-align:center;color:#000"></div></div><div class="c" style="left:1031px;top:146px;width:38px;height:15px;background:#fff"><div class="g" style="left:0.5px;top:-1px;width:38px;text-align:center;color:#000"></div></div><div class="c" style="left:1070px;top:146px;width:61px;height:15px;background:#fff"><div class="g" style="left:0.5px;top:-1px;width:61px;text-align:center;color:#000">14/06/2022</div></div><div class="c" style="left:1132px;top:146px;width:39px;height:15px;background:#fff"><div class="g" style="left:0.5px;top:-1px;width:39px;text-align:center;color:#000">0.90</div></div><div class="a" style="left:6px;top:161px;width:1181px;height:1px;background:#dcdcdc"></div><div class="a" style="left:153px;top:17px;width:1px;height:143px;background:#dcdcdc"></div><div class="a" style="left:302px;top:17px;width:1px;height:143px;background:#dcdcdc"></div><div class="a" style="left:451px;top:17px;width:1px;height:143px;background:#dcdcdc"></div><div class="a" style="left:600px;top:17px;width:1px;height:143px;background:#dcdcdc"></div><div class="a" style="left:749px;top:17px;width:1px;height:143px;background:#dcdcdc"></div><div class="a" style="left:817px;top:17px;width:1px;height:143px;background:#dcdcdc"></div><div class="a" style="left:856px;top:17px;width:1px;height:143px;background:#dcdcdc"></div><div class="a" style="left:928px;top:17px;width:1px;height:143px;background:#dcdcdc"></div><div class="a" style="left:967px;top:17px;width:1px;height:143px;background:#dcdcdc"></div><div class="a" style="left:1030px;top:17px;width:1px;height:143px;background:#dcdcdc"></div><div class="a" style="left:1069px;top:17px;width:1px;height:143px;background:#dcdcdc"></div><div class="a" style="left:1131px;top:17px;width:1px;height:143px;background:#dcdcdc"></div><div class="a" style="left:5px;top:16px;width:1px;height:144px;background:#6e6a64"></div></div>
<div class="a" style="left:1326px;top:520px;width:15px;height:17px;background:#ece9d8"></div>
<div class="a" style="left:1326px;top:537px;width:15px;height:143px;background:#f0f0f0"></div>
<div class="a" style="left:1326px;top:553px;width:15px;height:49px;background:#cdcdcd"></div>
<svg class="a" style="left:1326px;top:537px" width="15" height="16"><polyline points="4,9.5 7.5,6 11,9.5" fill="none" stroke="#858585" stroke-width="1.1"/></svg>
<svg class="a" style="left:1326px;top:663px" width="15" height="16"><polyline points="4,6.5 7.5,10 11,6.5" fill="none" stroke="#858585" stroke-width="1.1"/></svg>
<div class="a" style="left:154px;top:680px;width:1188px;height:6px;background:linear-gradient(#8eaad0 0,#8eaad0 1px,#b0c4de 1px,#b0c4de 5px,#a2b6cc 5px)"></div>
<div class="a" style="left:154px;top:686px;width:1188px;height:49px;background:#fff;overflow:hidden"><div class="a" style="left:0;top:0;width:1px;height:49px;background:#a3b6cf"></div><div class="a" style="left:1187px;top:0;width:1px;height:49px;background:#a3b6cf"></div><div class="a" style="left:1px;top:0;width:5px;height:49px;background:#f0f0f0"></div><div class="a" style="left:1px;top:0;width:1186px;height:17px;background:#f0f0f0"></div><div class="a" style="left:6px;top:1px;width:1px;height:16px;background:#e2e2e2"></div><div class="g" style="left:6px;top:1px;width:282px;text-align:center">Item name</div><div class="a" style="left:298px;top:1px;width:1px;height:16px;background:#e2e2e2"></div><div class="g" style="left:298px;top:1px;width:281px;text-align:center">Dosage</div><div class="a" style="left:589px;top:1px;width:1px;height:16px;background:#e2e2e2"></div><div class="g" style="left:589px;top:1px;width:282px;text-align:center">Quantity</div><div class="a" style="left:881px;top:1px;width:1px;height:16px;background:#e2e2e2"></div><div class="g" style="left:881px;top:1px;width:281px;text-align:center">Last issued</div><div class="a" style="left:6px;top:16px;width:1181px;height:1px;background:#6e6a64"></div><div class="c" style="left:6px;top:17px;width:291px;height:15px;background:#0078d7"><div class="g" style="left:0.5px;top:-1px;width:291px;text-align:center;color:#fff">Alogliptin  Tablets  25 mg</div></div><div class="c" style="left:298px;top:17px;width:290px;height:15px;background:#0078d7"><div class="g" style="left:0.5px;top:-1px;width:290px;text-align:center;color:#fff">ONE TO BE TAKEN EACH DAY</div></div><div class="c" style="left:589px;top:17px;width:291px;height:15px;background:#0078d7"><div class="g" style="left:0.5px;top:-1px;width:291px;text-align:center;color:#fff">56</div></div><div class="c" style="left:881px;top:17px;width:290px;height:15px;background:#0078d7"><div class="g" style="left:0.5px;top:-1px;width:290px;text-align:center;color:#fff">04/04/2023</div></div><div class="a" style="left:6px;top:32px;width:1181px;height:1px;background:#dcdcdc"></div><div class="c" style="left:6px;top:33px;width:291px;height:15px;background:#fafad2"><div class="g" style="left:0.5px;top:-1px;width:291px;text-align:center;color:#000">Apollo Twist  Lancets  0.36 mm/28 gauge</div></div><div class="c" style="left:298px;top:33px;width:290px;height:15px;background:#fafad2"><div class="g" style="left:0.5px;top:-1px;width:290px;text-align:center;color:#000">TO BE USED AS DIRECTED</div></div><div class="c" style="left:589px;top:33px;width:291px;height:15px;background:#fafad2"><div class="g" style="left:0.5px;top:-1px;width:291px;text-align:center;color:#000">200</div></div><div class="c" style="left:881px;top:33px;width:290px;height:15px;background:#fafad2"><div class="g" style="left:0.5px;top:-1px;width:290px;text-align:center;color:#000">10/01/2022</div></div><div class="a" style="left:6px;top:48px;width:1181px;height:1px;background:#dcdcdc"></div><div class="a" style="left:297px;top:17px;width:1px;height:32px;background:#dcdcdc"></div><div class="a" style="left:588px;top:17px;width:1px;height:32px;background:#dcdcdc"></div><div class="a" style="left:880px;top:17px;width:1px;height:32px;background:#dcdcdc"></div><div class="a" style="left:5px;top:16px;width:1px;height:33px;background:#6e6a64"></div></div>
<div class="a" style="left:1326px;top:686px;width:15px;height:17px;background:#ece9d8"></div>
<div class="a" style="left:1326px;top:703px;width:15px;height:32px;background:#f0f0f0"></div>
<div class="a" style="left:1326px;top:719px;width:15px;height:16px;background:#cdcdcd"></div>
<svg class="a" style="left:1326px;top:703px" width="15" height="16"><polyline points="4,9.5 7.5,6 11,9.5" fill="none" stroke="#858585" stroke-width="1.1"/></svg>
</body></html>
